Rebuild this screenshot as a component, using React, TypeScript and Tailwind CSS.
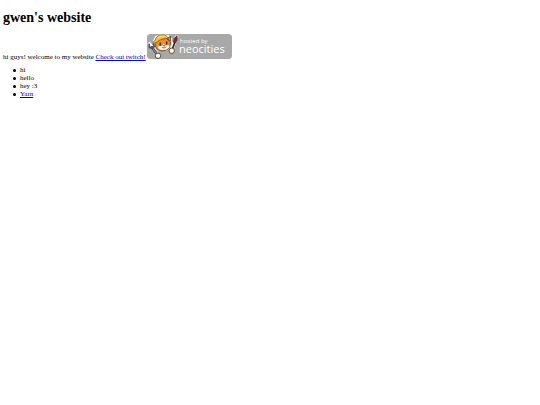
const greetings = ["hi", "hello", "hey :3"];

function NeocitiesBadge() {
  return (
    <svg
      viewBox="0 0 85 25"
      role="img"
      aria-label="hosted by neocities"
      className="inline-block h-[25px] w-[85px] align-baseline"
    >
      <rect width="85" height="25" rx="3.5" fill="#a8a8a8" />

      {/* white sticker edge around the cat and the tools */}
      <g fill="#fff" stroke="#fff" strokeWidth="2" strokeLinejoin="round" strokeLinecap="round">
        <path d="M7 7 9 3 14 1 21 2 24 5 23 12 19 16 12 16 8 13Z" />
        <path d="M2.5 10 5.5 14 11 21M29.5 3 27 9 25 15" fill="none" strokeWidth="3.6" />
      </g>

      {/* wrench */}
      <path d="m5 13.5 5.5 7.5" stroke="#333" strokeWidth="2.8" strokeLinecap="round" />
      <path d="m5 13.5 5.5 7.5" stroke="#a5afb5" strokeWidth="1.1" strokeLinecap="round" />
      <path d="m2 9.7.6 3.6 2.7 1.2 1.9-2-.9-3.2" fill="none" stroke="#4c555a" strokeWidth="1.7" />

      {/* brush */}
      <path d="m27.8 8.5-2.4 6.5" stroke="#3d2922" strokeWidth="1.8" strokeLinecap="round" />
      <path d="M30 1.8c.9 2.3.4 5-1.7 7.2l-1.9-.7c-.3-2.7 1.2-5.2 3.6-6.5Z" fill="#7c2c3c" stroke="#421c20" strokeWidth=".6" />

      {/* cat */}
      <path d="M8.5 8c-1.3 4.8 1.2 8.6 6.7 8.8 5.3.2 8.8-3.2 8.2-9L19 4l-9 2Z" fill="#ec8a2e" stroke="#4b2b19" strokeWidth=".8" />
      <path d="M20 4.2 23.6 2.4l-.2 4.9Z" fill="#ec8a2e" stroke="#4b2b19" strokeWidth=".7" />
      <path d="M10.6 13.2c1.2-1.3 2.8-1.7 4.6-1l1.5-3.1 1.6 2.6c1.5-.6 3.1-.5 4.4.3-1 2.8-3.2 4.2-6.3 4.1-2.8 0-4.8-1-5.8-2.9Z" fill="#fff5df" />
      <path d="M13.2 9.2v2M19.7 8v2" stroke="#292323" strokeWidth="1.3" strokeLinecap="round" />
      <path d="m16.3 11.5 1.6-.3-.7 1.2Z" fill="#633126" stroke="#633126" strokeWidth=".4" />
      <path d="M14.8 13.4c1.5.8 3.2.6 4.5-.6" fill="none" stroke="#914325" strokeWidth=".8" />

      {/* hard hat */}
      <path d="M8.2 6.3C8.8 3 11 .8 14.8.7c3.5-.1 5.7 1.3 6.5 4-4.2-.5-8 .5-11.7 3.6L6.3 9.4c-.7-1.2.5-2.3 1.9-3.1Z" fill="#f2bd39" stroke="#755020" strokeWidth=".7" />
      <path d="M11 3.6c1.9-1.3 4-1.7 6.3-1.2" fill="none" stroke="#ffe37a" strokeWidth="1.1" />

      {/* paws */}
      <circle cx="11" cy="21.8" r="2.7" fill="#fff8ec" stroke="#443127" strokeWidth=".8" />
      <circle cx="24.8" cy="16.8" r="2.7" fill="#fff8ec" stroke="#443127" strokeWidth=".8" />
      <path d="M10.2 23v1M12 22.7v1M24 18v1M25.9 17.8v1" stroke="#e0a45f" strokeWidth=".6" />

      <g fill="#fff" fontFamily="'Open Sans', 'Noto Sans', sans-serif">
        <text x="33" y="9" fontSize="6">hosted by</text>
        <text x="32" y="19" fontSize="11">neocities</text>
      </g>
    </svg>
  );
}

export default function App() {
  return (
    <main className="min-h-screen bg-white px-[3px] pt-[10px] font-['Liberation_Serif',serif] text-[7px] leading-[8px] text-black">
      <h1 className="mb-[8px] text-[14px] leading-[16px] font-bold">gwen's website</h1>
      <p>
        hi guys! welcome to my website{" "}
        <a href="#twitch" className="text-[#0000ee] underline">Check out twitch!</a>{" "}
        <a href="#neocities">
          <NeocitiesBadge />
        </a>
      </p>
      <ul className="mt-[5px] px-[10px]">
        {greetings.map((greeting) => (
          <li key={greeting} className="flex items-center gap-[4px] before:size-[3px] before:rounded-full before:bg-black">
            {greeting}
          </li>
        ))}
        <li className="flex items-center gap-[4px] before:size-[3px] before:rounded-full before:bg-black">
          <a href="#yarn" className="text-[#0000ee] underline">Yarn</a>
        </li>
      </ul>
    </main>
  );
}
